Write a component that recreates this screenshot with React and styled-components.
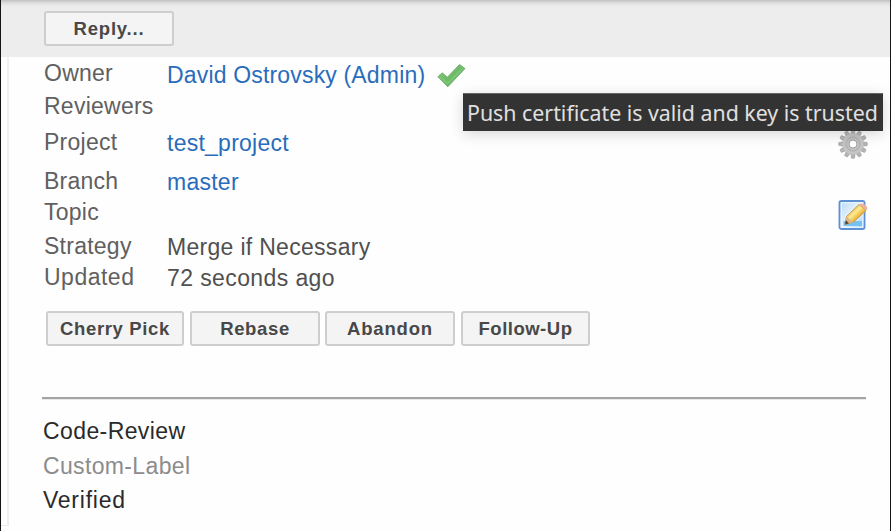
import React from "react";
import styled, { createGlobalStyle } from "styled-components";

const GlobalStyle = createGlobalStyle`
  body { margin: 0; background: #fefefe; font-family: "Liberation Sans", Arial, sans-serif; }
  * { box-sizing: border-box; }
`;

const Screen = styled.div`
  position: relative;
  width: 891px;
  height: 531px;
  overflow: hidden;
  background: #fefefe;
  border-left: 1px solid #151515;
  border-right: 1px solid #151515;
`;

const Toolbar = styled.header`
  height: 57px;
  padding: 11px 0 0 43px;
  background: linear-gradient(#c0c0c0 0, #dedede 3px, #ebebeb 6px, #ededed 8px);
`;

const Button = styled.button`
  display: block;
  width: ${(p) => p.$width}px;
  height: 35px;
  padding: 0;
  border: 2px solid #cecece;
  border-radius: 3px;
  background: #f4f4f4;
  color: #484848;
  font: bold 18.5px/28px "Liberation Sans", Arial, sans-serif;
  letter-spacing: ${(p) => p.$spacing}px;
  text-align: center;
`;

const Panel = styled.main`
  height: 469px;
  padding: 5px 24px 0 35px;
  margin-left: 6px;
  border-left: 2px solid #f0f0f0;
`;

const Row = styled.div`
  display: grid;
  grid-template-columns: 123px 1fr 28px;
  height: ${(p) => p.$height}px;
`;

const Text = styled.span`
  display: block;
  justify-self: start;
  font-size: 23px;
  line-height: 22px;
  white-space: nowrap;
  color: ${(p) => p.$color || "#606060"};
  letter-spacing: ${(p) => p.$spacing ?? 0.25}px;
`;

const Value = styled.div`
  display: flex;
  align-items: flex-start;
  padding-top: ${(p) => p.$drop ?? 1}px;
`;

const Link = styled(Text).attrs({ as: "a" })`
  color: #2a6cbc;
`;

const Icon = styled.svg`
  display: block;
  flex: none;
  margin: ${(p) => p.$margin || 0};
`;

const Actions = styled.div`
  display: flex;
  margin: 16px 0 0 2px;
  & > :nth-child(2) { margin-left: 6px; }
  & > :nth-child(3) { margin-left: 5px; }
  & > :nth-child(4) { margin-left: 6px; }
`;

const Rule = styled.hr`
  height: 3px;
  margin: 51px 0 0 -2px;
  border: 0;
  border-top: 2px solid #a4a4a4;
  border-bottom: 1px solid #e9e9e9;
`;

const Labels = styled.div`
  display: grid;
  grid-auto-rows: 34.5px;
  padding-top: 20px;
  margin-left: -1px;
`;

const PanelFoot = styled.div`
  width: 8px;
  height: 1px;
  margin-top: -1px;
  background: #ececec;
`;

const Tooltip = styled.div`
  position: absolute;
  left: 462px;
  top: 93px;
  width: 420px;
  height: 38px;
  padding-left: 4px;
  background: #333;
  border-top: 1px solid #666;
  color: #e0e0e0;
  font: 21.35px/38px "Noto Sans", sans-serif;
  white-space: nowrap;
  box-shadow: 0 3px 14px rgba(0, 0, 0, 0.16);
`;

const Check = () => (
  <Icon $margin="-1px 0 0 12px" width="30" height="26" viewBox="0 0 30 26">
    <defs>
      <linearGradient id="check" x1="0" y1="0" x2="1" y2="1">
        <stop offset="0" stopColor="#86ca80" />
        <stop offset="1" stopColor="#5aa955" />
      </linearGradient>
    </defs>
    <path d="M.8 13.8 5.3 9.8 10.3 14.2 22.5 1.5 28 5.6 10.8 23.8Z" fill="url(#check)" stroke="#66ae62" strokeWidth=".8" strokeLinejoin="round" />
    <path d="M2.8 13.8 10.8 20.3 26 5" fill="none" stroke="#7dc576" strokeWidth="2" />
  </Icon>
);

const Gear = () => (
  <Icon $margin="-2px 0 0 0" width="30" height="30" viewBox="0 0 30 30">
    <g fill="#b4b4b4" stroke="#a4a4a4" strokeWidth=".7">
      {[0, 30, 60, 90, 120, 150, 180, 210, 240, 270, 300, 330].map((a) => (
        <path key={a} d="M12.8 6 13.5 .8H16.5L17.2 6Z" transform={`rotate(${a} 15 15)`} />
      ))}
      <circle cx="15" cy="15" r="10.6" fill="#c4c4c4" stroke="none" />
    </g>
    <circle cx="15" cy="15" r="6.8" fill="none" stroke="#b3b3b3" strokeWidth="1.5" />
    <circle cx="15" cy="15" r="4" fill="#fff" stroke="#a0a0a0" strokeWidth="1" />
  </Icon>
);

const Edit = () => (
  <Icon $margin="-2px 0 0 0" width="30" height="32" viewBox="0 0 30 32">
    <defs>
      <linearGradient id="paper" x1="0" y1="0" x2="1" y2="1">
        <stop offset="0" stopColor="#b5d8f8" />
        <stop offset=".55" stopColor="#eef7ff" />
        <stop offset="1" stopColor="#8cc9f4" />
      </linearGradient>
      <linearGradient id="pencil" x1=".2" y1=".2" x2=".8" y2=".8">
        <stop offset="0" stopColor="#d8a43f" />
        <stop offset=".4" stopColor="#ffea90" />
        <stop offset=".65" stopColor="#eec04a" />
        <stop offset="1" stopColor="#c7882b" />
      </linearGradient>
    </defs>
    <rect x="1.5" y="2" width="25" height="28" rx="2" fill="url(#paper)" stroke="#5f90d2" strokeWidth="1.9" />
    <rect x="3.3" y="3.8" width="21.5" height="24.5" fill="none" stroke="#eaf5ff" strokeWidth="1.2" />
    <path d="M5.5 22H24V27H5.5Z" fill="#74c3f2" />
    <path d="M7 25.5 8.5 17.5 21 5.5 28 11.5 15.5 23Z" fill="url(#pencil)" stroke="#c99a48" strokeWidth="1" />
    <path d="M7 25.5 8.5 17.5 15.5 23Z" fill="#dfb888" />
    <path d="M7 25.5 7.9 21.2 11 24.2Z" fill="#55412d" />
    <path d="M21 5.5 23 4.5Q29 5.2 29.5 10L28 11.5Z" fill="#e9b49b" />
  </Icon>
);

const details = [
  { label: "Owner", height: 33, link: "David Ostrovsky (Admin)", spacing: 0.17, drop: 2, mark: <Check /> },
  { label: "Reviewers", height: 36 },
  { label: "Project", height: 39, link: "test_project", icon: <Gear /> },
  { label: "Branch", height: 31, link: "master" },
  { label: "Topic", height: 34, icon: <Edit /> },
  { label: "Strategy", height: 31, value: "Merge if Necessary", spacing: 0.3 },
  { label: "Updated", labelSpacing: 0.5, height: 29, value: "72 seconds ago", spacing: 0.4 },
];

export default function App() {
  return (
    <Screen>
      <GlobalStyle />
      <Toolbar>
        <Button $width={130} $spacing={0.8}>Reply...</Button>
      </Toolbar>
      <Panel>
        {details.map((d) => (
          <Row key={d.label} $height={d.height}>
            <Text $spacing={d.labelSpacing}>{d.label}</Text>
            <Value $drop={d.drop}>
              {d.link && <Link $spacing={d.spacing}>{d.link}</Link>}
              {d.value && <Text $color="#505050" $spacing={d.spacing}>{d.value}</Text>}
              {d.mark}
            </Value>
            {d.icon}
          </Row>
        ))}
        <Actions>
          <Button $width={138} $spacing={0.65}>Cherry Pick</Button>
          <Button $width={130} $spacing={0.65}>Rebase</Button>
          <Button $width={130} $spacing={0.8}>Abandon</Button>
          <Button $width={129} $spacing={0.5}>Follow-Up</Button>
        </Actions>
        <Rule />
        <Labels>
          <Text $color="#2a2a2a" $spacing={0.4}>Code-Review</Text>
          <Text $color="#8c8c8c" $spacing={0.35}>Custom-Label</Text>
          <Text $color="#2a2a2a" $spacing={0.75}>Verified</Text>
        </Labels>
      </Panel>
      <PanelFoot />
      <Tooltip>Push certificate is valid and key is trusted</Tooltip>
    </Screen>
  );
}
